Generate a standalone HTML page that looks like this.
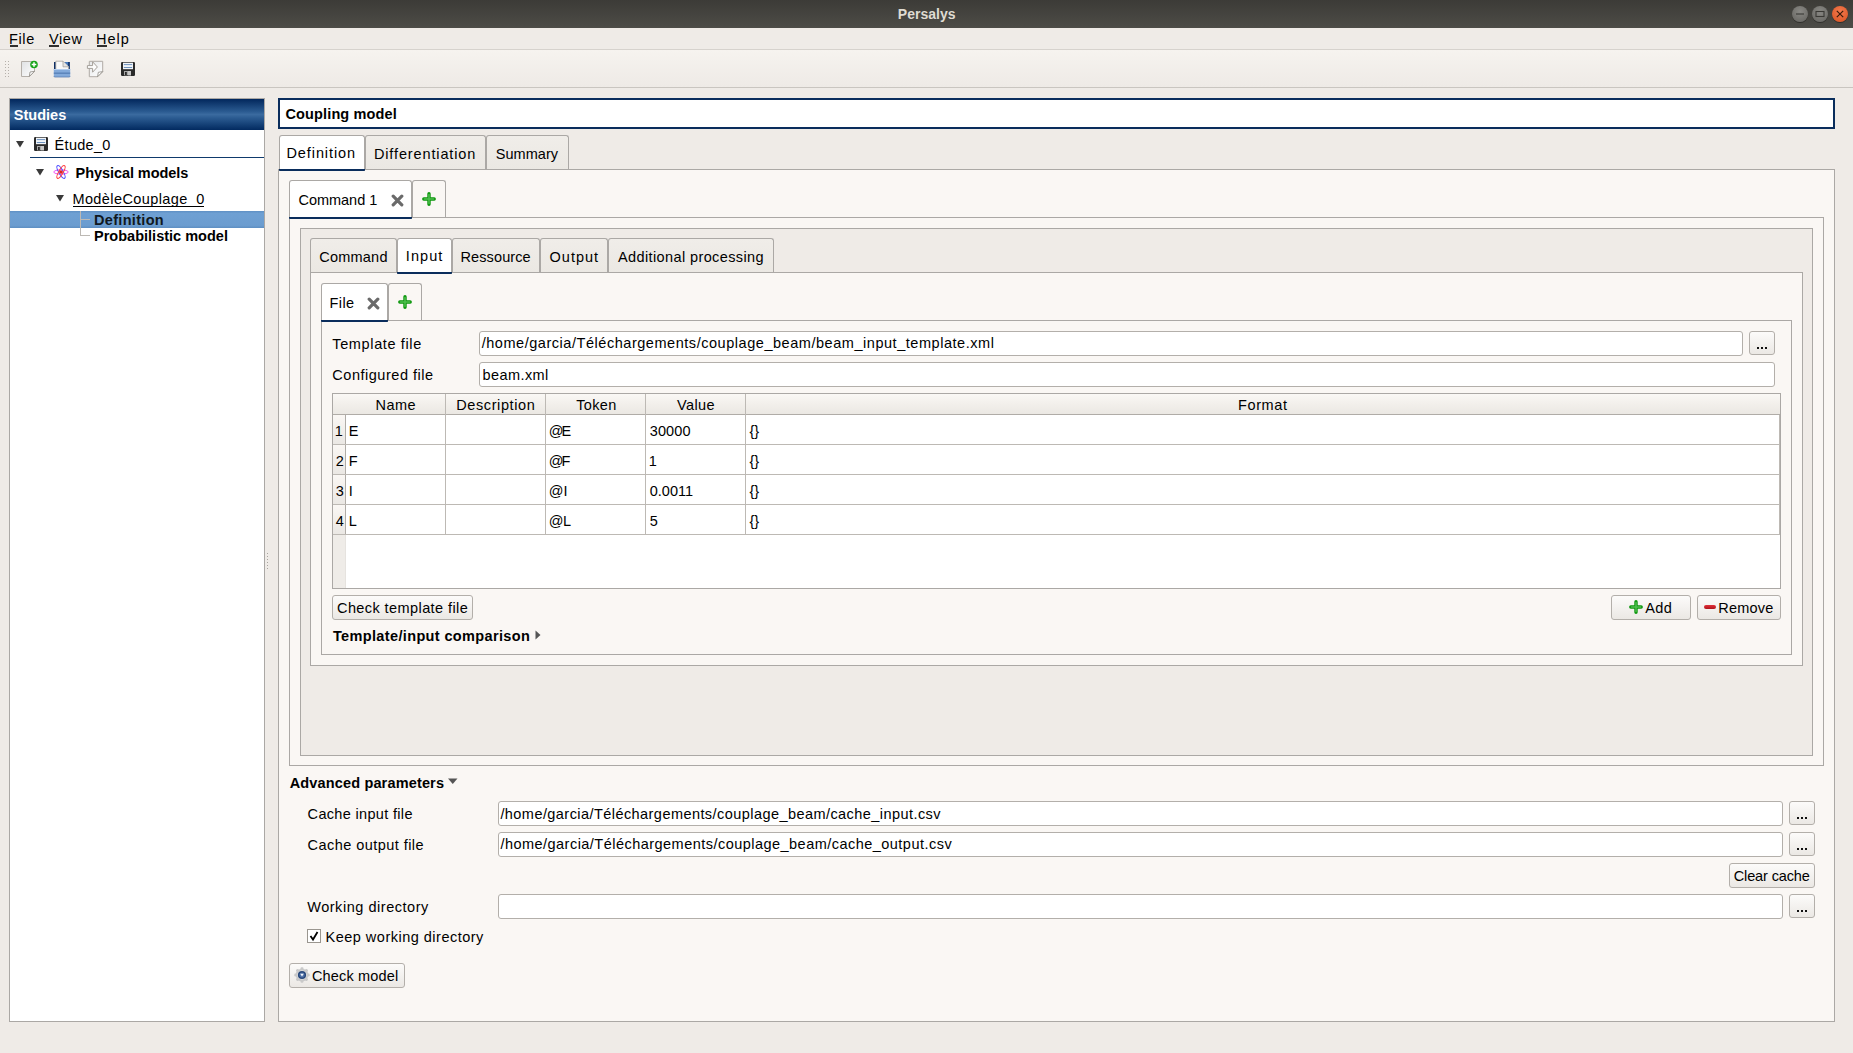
<!DOCTYPE html>
<html><head><meta charset="utf-8"><title>Persalys</title>
<style>
html,body{margin:0;padding:0;}
body{width:1853px;height:1053px;position:relative;overflow:hidden;background:#efebe7;font-family:"Liberation Sans",sans-serif;}
body>div,body>svg,body>span{position:absolute;}
.t{white-space:pre;line-height:20px;}
</style></head><body>
<div style="left:0px;top:0px;width:1853px;height:28px;background:linear-gradient(#3c3b37,#4d4c47)"></div>
<div style="left:0px;top:28px;width:1853px;height:21px;background:#efebe7"></div>
<div style="left:0px;top:49px;width:1853px;height:1px;background:#d6d2cd"></div>
<div style="left:10px;top:45px;width:8px;height:2px;background:rgba(0,0,0,.8)"></div>
<div style="left:49px;top:45px;width:10px;height:2px;background:rgba(0,0,0,.8)"></div>
<div style="left:97px;top:45px;width:10px;height:2px;background:rgba(0,0,0,.8)"></div>
<div style="left:0px;top:50px;width:1853px;height:37px;background:linear-gradient(#f6f3ef,#eeeae6)"></div>
<div style="left:0px;top:87px;width:1853px;height:1px;background:#c9c5c0"></div>
<div style="left:9px;top:98px;width:256px;height:924px;background:#fff;border:1px solid #aba8a5;box-sizing:border-box"></div>
<div style="left:10px;top:99px;width:254px;height:31px;background:linear-gradient(#02275c 0%,#2a5a90 40%,#3a6a9f 50%,#2a5a90 62%,#022a60 100%)"></div>
<div style="left:30px;top:157px;width:234px;height:1px;background:#0f3a6c"></div>
<div style="left:73px;top:206px;width:131px;height:1px;background:#000"></div>
<div style="left:10px;top:211px;width:254px;height:17px;background:linear-gradient(#5f90c4,#6fa0d3 15%,#6b9ccf 85%,#5d8ec2)"></div>
<div style="left:80px;top:211px;width:1px;height:25px;background:#bdb9b4"></div>
<div style="left:80px;top:219px;width:10px;height:1px;background:#bdb9b4"></div>
<div style="left:80px;top:235px;width:10px;height:1px;background:#bdb9b4"></div>
<div style="left:267px;top:553px;width:1px;height:1px;background:#a9a5a0"></div>
<div style="left:267px;top:556px;width:1px;height:1px;background:#a9a5a0"></div>
<div style="left:267px;top:559px;width:1px;height:1px;background:#a9a5a0"></div>
<div style="left:267px;top:562px;width:1px;height:1px;background:#a9a5a0"></div>
<div style="left:267px;top:565px;width:1px;height:1px;background:#a9a5a0"></div>
<div style="left:267px;top:568px;width:1px;height:1px;background:#a9a5a0"></div>
<div style="left:278px;top:98px;width:1557px;height:31px;background:#fff;border:2px solid #0a2d5c;box-sizing:border-box"></div>
<div style="left:278px;top:169px;width:1557px;height:853px;background:#faf7f4;border:1px solid #aba8a5;box-sizing:border-box"></div>
<div style="left:279px;top:135px;width:86px;height:36px;background:#fff;border:1px solid #aba8a5;border-bottom:none;border-radius:3px 3px 0 0;box-sizing:border-box"></div>
<div style="left:279px;top:169px;width:86px;height:2px;background:#0a2d5c;border-radius:0 0 1px 1px"></div>
<div style="left:365px;top:135px;width:121px;height:34px;background:linear-gradient(#f0ede9,#ebe8e3);border:1px solid #aba8a5;border-bottom:none;border-radius:3px 3px 0 0;box-sizing:border-box"></div>
<div style="left:486px;top:135px;width:83px;height:34px;background:linear-gradient(#f0ede9,#ebe8e3);border:1px solid #aba8a5;border-bottom:none;border-radius:3px 3px 0 0;box-sizing:border-box"></div>
<div style="left:289px;top:217px;width:1535px;height:549px;background:#faf7f4;border:1px solid #aba8a5;box-sizing:border-box"></div>
<div style="left:289px;top:180px;width:123px;height:39px;background:#fff;border:1px solid #aba8a5;border-bottom:none;border-radius:3px 3px 0 0;box-sizing:border-box"></div>
<div style="left:289px;top:217px;width:123px;height:2px;background:#0a2d5c;border-radius:0 0 1px 1px"></div>
<div style="left:412px;top:180px;width:34px;height:37px;background:#faf7f4;border:1px solid #aba8a5;border-bottom:none;border-radius:3px 3px 0 0;box-sizing:border-box"></div>
<div style="left:300px;top:228px;width:1513px;height:528px;background:#efebe7;border:1px solid #aba8a5;box-sizing:border-box"></div>
<div style="left:310px;top:272px;width:1493px;height:394px;background:#faf7f4;border:1px solid #aba8a5;box-sizing:border-box"></div>
<div style="left:310px;top:238px;width:87px;height:34px;background:linear-gradient(#f0ede9,#ebe8e3);border:1px solid #aba8a5;border-bottom:none;border-radius:3px 3px 0 0;box-sizing:border-box"></div>
<div style="left:397px;top:238px;width:55px;height:36px;background:#fff;border:1px solid #aba8a5;border-bottom:none;border-radius:3px 3px 0 0;box-sizing:border-box"></div>
<div style="left:397px;top:272px;width:55px;height:2px;background:#0a2d5c;border-radius:0 0 1px 1px"></div>
<div style="left:452px;top:238px;width:88px;height:34px;background:linear-gradient(#f0ede9,#ebe8e3);border:1px solid #aba8a5;border-bottom:none;border-radius:3px 3px 0 0;box-sizing:border-box"></div>
<div style="left:540px;top:238px;width:68px;height:34px;background:linear-gradient(#f0ede9,#ebe8e3);border:1px solid #aba8a5;border-bottom:none;border-radius:3px 3px 0 0;box-sizing:border-box"></div>
<div style="left:608px;top:238px;width:166px;height:34px;background:linear-gradient(#f0ede9,#ebe8e3);border:1px solid #aba8a5;border-bottom:none;border-radius:3px 3px 0 0;box-sizing:border-box"></div>
<div style="left:321px;top:320px;width:1471px;height:335px;background:#faf7f4;border:1px solid #aba8a5;box-sizing:border-box"></div>
<div style="left:321px;top:283px;width:67px;height:39px;background:#fff;border:1px solid #aba8a5;border-bottom:none;border-radius:3px 3px 0 0;box-sizing:border-box"></div>
<div style="left:321px;top:320px;width:67px;height:2px;background:#0a2d5c;border-radius:0 0 1px 1px"></div>
<div style="left:388px;top:283px;width:34px;height:37px;background:#faf7f4;border:1px solid #aba8a5;border-bottom:none;border-radius:3px 3px 0 0;box-sizing:border-box"></div>
<div style="left:479px;top:331px;width:1264px;height:25px;background:#fff;border:1px solid #b3afaa;border-radius:3px;box-sizing:border-box"></div>
<div style="left:1749px;top:331px;width:26px;height:24px;background:linear-gradient(#fcfbfa,#ebe8e4);border:1px solid #b3afaa;border-radius:3px;box-sizing:border-box"></div>
<div style="left:479px;top:362px;width:1296px;height:25px;background:#fff;border:1px solid #b3afaa;border-radius:3px;box-sizing:border-box"></div>
<div style="left:1757px;top:347px;width:2px;height:2px;background:#111"></div>
<div style="left:1761px;top:347px;width:2px;height:2px;background:#111"></div>
<div style="left:1765px;top:347px;width:2px;height:2px;background:#111"></div>
<div style="left:332px;top:393px;width:1449px;height:196px;background:#fff;border:1px solid #aba8a5;box-sizing:border-box"></div>
<div style="left:333px;top:394px;width:1447px;height:20px;background:linear-gradient(#faf8f5,#f3f0ec 45%,#ebe8e3)"></div>
<div style="left:333px;top:414px;width:1447px;height:1px;background:#b0aca7"></div>
<div style="left:333px;top:415px;width:12px;height:173px;background:#efece8"></div>
<div style="left:333px;top:415px;width:12px;height:29px;background:linear-gradient(#faf7f4,#ebe8e4)"></div>
<div style="left:333px;top:445px;width:12px;height:29px;background:linear-gradient(#faf7f4,#ebe8e4)"></div>
<div style="left:333px;top:475px;width:12px;height:29px;background:linear-gradient(#faf7f4,#ebe8e4)"></div>
<div style="left:333px;top:505px;width:12px;height:29px;background:linear-gradient(#faf7f4,#ebe8e4)"></div>
<div style="left:345px;top:415px;width:1px;height:120px;background:#b0aca7"></div>
<div style="left:345px;top:535px;width:1px;height:53px;background:#e6e3df"></div>
<div style="left:445px;top:394px;width:1px;height:141px;background:#bdb9b4"></div>
<div style="left:545px;top:394px;width:1px;height:141px;background:#bdb9b4"></div>
<div style="left:645px;top:394px;width:1px;height:141px;background:#bdb9b4"></div>
<div style="left:745px;top:394px;width:1px;height:141px;background:#bdb9b4"></div>
<div style="left:333px;top:444px;width:1447px;height:1px;background:#bdb9b4"></div>
<div style="left:333px;top:474px;width:1447px;height:1px;background:#bdb9b4"></div>
<div style="left:333px;top:504px;width:1447px;height:1px;background:#bdb9b4"></div>
<div style="left:333px;top:534px;width:1447px;height:1px;background:#bdb9b4"></div>
<div style="left:1779px;top:415px;width:1px;height:120px;background:#bdb9b4"></div>
<div style="left:332px;top:595px;width:141px;height:25px;background:linear-gradient(#fcfbfa,#ebe8e4);border:1px solid #b3afaa;border-radius:3px;box-sizing:border-box"></div>
<div style="left:1611px;top:595px;width:80px;height:25px;background:linear-gradient(#fcfbfa,#ebe8e4);border:1px solid #b3afaa;border-radius:3px;box-sizing:border-box"></div>
<div style="left:1697px;top:595px;width:84px;height:25px;background:linear-gradient(#fcfbfa,#ebe8e4);border:1px solid #b3afaa;border-radius:3px;box-sizing:border-box"></div>
<div style="left:498px;top:801px;width:1285px;height:25px;background:#fff;border:1px solid #b3afaa;border-radius:3px;box-sizing:border-box"></div>
<div style="left:498px;top:832px;width:1285px;height:25px;background:#fff;border:1px solid #b3afaa;border-radius:3px;box-sizing:border-box"></div>
<div style="left:1789px;top:801px;width:26px;height:24px;background:linear-gradient(#fcfbfa,#ebe8e4);border:1px solid #b3afaa;border-radius:3px;box-sizing:border-box"></div>
<div style="left:1789px;top:832px;width:26px;height:24px;background:linear-gradient(#fcfbfa,#ebe8e4);border:1px solid #b3afaa;border-radius:3px;box-sizing:border-box"></div>
<div style="left:1797px;top:817px;width:2px;height:2px;background:#111"></div>
<div style="left:1801px;top:817px;width:2px;height:2px;background:#111"></div>
<div style="left:1805px;top:817px;width:2px;height:2px;background:#111"></div>
<div style="left:1797px;top:848px;width:2px;height:2px;background:#111"></div>
<div style="left:1801px;top:848px;width:2px;height:2px;background:#111"></div>
<div style="left:1805px;top:848px;width:2px;height:2px;background:#111"></div>
<div style="left:1729px;top:863px;width:86px;height:25px;background:linear-gradient(#fcfbfa,#ebe8e4);border:1px solid #b3afaa;border-radius:3px;box-sizing:border-box"></div>
<div style="left:498px;top:894px;width:1285px;height:25px;background:#fff;border:1px solid #b3afaa;border-radius:3px;box-sizing:border-box"></div>
<div style="left:1789px;top:894px;width:26px;height:24px;background:linear-gradient(#fcfbfa,#ebe8e4);border:1px solid #b3afaa;border-radius:3px;box-sizing:border-box"></div>
<div style="left:1797px;top:910px;width:2px;height:2px;background:#111"></div>
<div style="left:1801px;top:910px;width:2px;height:2px;background:#111"></div>
<div style="left:1805px;top:910px;width:2px;height:2px;background:#111"></div>
<div style="left:307px;top:929px;width:14px;height:14px;background:#fff;border:1px solid #9a968f;box-sizing:border-box"></div>
<div style="left:289px;top:963px;width:116px;height:25px;background:linear-gradient(#fcfbfa,#ebe8e4);border:1px solid #b3afaa;border-radius:3px;box-sizing:border-box"></div>
<div style="left:5px;top:61px;width:1px;height:1px;background:#b5b0aa"></div>
<div style="left:8px;top:61px;width:1px;height:1px;background:#b5b0aa"></div>
<div style="left:5px;top:64px;width:1px;height:1px;background:#b5b0aa"></div>
<div style="left:8px;top:64px;width:1px;height:1px;background:#b5b0aa"></div>
<div style="left:5px;top:67px;width:1px;height:1px;background:#b5b0aa"></div>
<div style="left:8px;top:67px;width:1px;height:1px;background:#b5b0aa"></div>
<div style="left:5px;top:70px;width:1px;height:1px;background:#b5b0aa"></div>
<div style="left:8px;top:70px;width:1px;height:1px;background:#b5b0aa"></div>
<div style="left:5px;top:73px;width:1px;height:1px;background:#b5b0aa"></div>
<div style="left:8px;top:73px;width:1px;height:1px;background:#b5b0aa"></div>
<div style="left:5px;top:76px;width:1px;height:1px;background:#b5b0aa"></div>
<div style="left:8px;top:76px;width:1px;height:1px;background:#b5b0aa"></div>
<div style="left:1792px;top:6px;width:16px;height:16px;border-radius:50%;background:radial-gradient(circle at 50% 35%,#8a8985,#63625e);box-shadow:0 1px 0 rgba(0,0,0,.35)"></div>
<div style="left:1812px;top:6px;width:16px;height:16px;border-radius:50%;background:radial-gradient(circle at 50% 35%,#8a8985,#63625e);box-shadow:0 1px 0 rgba(0,0,0,.35)"></div>
<div style="left:1832px;top:6px;width:16px;height:16px;border-radius:50%;background:radial-gradient(circle at 50% 35%,#f47b4f,#d9501f);box-shadow:0 1px 0 rgba(0,0,0,.35)"></div>
<svg style="left:1792px;top:6px" width="56" height="16"><line x1="4" y1="8" x2="12" y2="8" stroke="#3a3935" stroke-width="1.1"/><rect x="24" y="5.5" width="8" height="5" fill="none" stroke="#3a3935" stroke-width="1.1"/><path d="M44.8 4.8 L51.2 11.2 M51.2 4.8 L44.8 11.2" stroke="#3a1a0a" stroke-width="1.2"/></svg>
<svg style="left:390.5px;top:193.5px" width="13" height="13" viewBox="0 0 13 13"><path d="M2.2 2.2 L10.8 10.8 M10.8 2.2 L2.2 10.8" stroke="#6a6a6a" stroke-width="3.2" stroke-linecap="round"/></svg>
<svg style="left:422px;top:192px" width="14" height="14" viewBox="0 0 14 14"><path d="M7 1.8 V12.2 M1.8 7 H12.2" stroke="#0c960c" stroke-width="3.4" stroke-linecap="round"/><path d="M7 2.4 V11.6 M2.4 7 H11.6" stroke="#4fbf4f" stroke-width="1.5" stroke-linecap="round"/></svg>
<svg style="left:366.5px;top:296.5px" width="13" height="13" viewBox="0 0 13 13"><path d="M2.2 2.2 L10.8 10.8 M10.8 2.2 L2.2 10.8" stroke="#6a6a6a" stroke-width="3.2" stroke-linecap="round"/></svg>
<svg style="left:398px;top:295px" width="14" height="14" viewBox="0 0 14 14"><path d="M7 1.8 V12.2 M1.8 7 H12.2" stroke="#0c960c" stroke-width="3.4" stroke-linecap="round"/><path d="M7 2.4 V11.6 M2.4 7 H11.6" stroke="#4fbf4f" stroke-width="1.5" stroke-linecap="round"/></svg>
<svg style="left:1629px;top:600px" width="14" height="14" viewBox="0 0 14 14"><path d="M7 1.8 V12.2 M1.8 7 H12.2" stroke="#0c960c" stroke-width="3.4" stroke-linecap="round"/><path d="M7 2.4 V11.6 M2.4 7 H11.6" stroke="#4fbf4f" stroke-width="1.5" stroke-linecap="round"/></svg>
<div style="left:1704px;top:605px;width:12px;height:4px;border-radius:2px;background:linear-gradient(#e0303a,#b0141c)"></div>
<svg style="left:535px;top:630px" width="6" height="10"><path d="M0.5 0.5 L5.5 5 L0.5 9.5 Z" fill="#555"/></svg>
<svg style="left:448px;top:778px" width="10" height="7"><path d="M0 0.5 H9.5 L4.75 6 Z" fill="#555"/></svg>
<svg style="left:307px;top:929px" width="14" height="14"><path d="M3.5 7 L6 10.5 L10.5 3" fill="none" stroke="#000" stroke-width="1.8"/></svg>
<svg style="left:121px;top:62px" width="14" height="14" viewBox="0 0 14 14">
<rect x="0" y="0" width="14" height="14" rx="1.2" fill="#2a2a2a"/>
<rect x="2" y="0.7" width="10" height="6.5" fill="#f2f5f8"/>
<rect x="2.8" y="2.1" width="8.4" height="1" fill="#6f93bf"/>
<rect x="2.8" y="5.0" width="8.4" height="1" fill="#6f93bf"/>
<rect x="3" y="9" width="7" height="4.3" fill="#a9a9a9"/>
<rect x="7" y="9" width="3" height="4.3" fill="#c8c8c8"/>
<rect x="4" y="10" width="1.8" height="3" fill="#2a2a2a"/>
</svg>
<svg style="left:34px;top:137px" width="14" height="14" viewBox="0 0 14 14">
<rect x="0" y="0" width="14" height="14" rx="1.2" fill="#2a2a2a"/>
<rect x="2" y="0.7" width="10" height="6.5" fill="#f2f5f8"/>
<rect x="2.8" y="2.1" width="8.4" height="1" fill="#6f93bf"/>
<rect x="2.8" y="5.0" width="8.4" height="1" fill="#6f93bf"/>
<rect x="3" y="9" width="7" height="4.3" fill="#a9a9a9"/>
<rect x="7" y="9" width="3" height="4.3" fill="#c8c8c8"/>
<rect x="4" y="10" width="1.8" height="3" fill="#2a2a2a"/>
</svg>
<svg style="left:20px;top:60px" width="19" height="18" viewBox="0 0 19 18">
<defs><linearGradient id="pg" x1="0" y1="0" x2="1" y2="1"><stop offset="0" stop-color="#dfe1e3"/><stop offset="1" stop-color="#fff"/></linearGradient></defs>
<path d="M1.5 1.5 H14.5 V11.3 L9.3 16.5 H1.5 Z" fill="url(#pg)" stroke="#b4afa9" stroke-width="1"/>
<path d="M9.3 16.5 L10 12 L14.5 11.3 Z" fill="#fff" stroke="#8a8680" stroke-width="0.8"/>
<circle cx="14" cy="4.5" r="3.8" fill="#1aa51a"/>
<path d="M14 2.2 V6.8 M11.7 4.5 H16.3" stroke="#fff" stroke-width="1.5"/>
</svg>
<svg style="left:53px;top:60px" width="18" height="18" viewBox="0 0 18 18">
<path d="M1 2 H16.5 V10 H1 Z" fill="#4a7cbd"/>
<path d="M1 2 H3 V10 H1Z" fill="#0e2f66"/>
<path d="M15.2 2 H16.8 V10 H15.2Z" fill="#0e2f66"/>
<path d="M2.8 1.2 H10 L15.6 6.8 V10 H2.8 Z" fill="#f9f9f9" stroke="#a6a29d" stroke-width="0.8"/>
<path d="M10 1.2 V6.8 H15.6" fill="#e4e4e4" stroke="#a6a29d" stroke-width="0.8"/>
<path d="M0.8 9 H17.2 V15.8 Q17.2 17 16 17 H2 Q0.8 17 0.8 15.8Z" fill="#82a9da"/>
<rect x="0.8" y="9" width="16.4" height="1" fill="#b3cdee"/>
<rect x="0.8" y="12.6" width="16.4" height="1.1" fill="#4e78b0"/>
<path d="M0.8 16 Q0.8 17 2 17 H16 Q17.2 17 17.2 16" fill="none" stroke="#5a7fb3" stroke-width="0.8"/>
</svg>
<svg style="left:86px;top:60px" width="18" height="18" viewBox="0 0 18 18">
<defs><linearGradient id="pg2" x1="0" y1="0" x2="1" y2="1"><stop offset="0" stop-color="#e6e8ea"/><stop offset="1" stop-color="#fff"/></linearGradient></defs>
<path d="M3.3 1.3 H16.7 V11.6 L11.6 16.7 H3.3 Z" fill="url(#pg2)" stroke="#b0aba5" stroke-width="1"/>
<path d="M11.6 16.7 L12.3 12.3 L16.7 11.6 Z" fill="#fff" stroke="#8a8680" stroke-width="0.8"/>
<path d="M1.4 5.6 H6.6 V1.8 L11.4 7 L6.6 12.2 V8.4 H1.4 Z" fill="#fdfdfd" stroke="#a49f99" stroke-width="1"/>
</svg>
<svg style="left:53px;top:165px" width="16" height="14" viewBox="0 0 16 14">
<ellipse cx="8" cy="7" rx="7.2" ry="2.2" fill="none" stroke="#f050f0" stroke-width="1"/>
<ellipse cx="8" cy="7" rx="7.2" ry="2.2" transform="rotate(60 8 7)" fill="none" stroke="#5050ff" stroke-width="1"/>
<ellipse cx="8" cy="7" rx="7.2" ry="2.2" transform="rotate(-60 8 7)" fill="none" stroke="#ff4040" stroke-width="1"/>
<circle cx="8" cy="7" r="1.8" fill="#e02020"/>
</svg>
<svg style="left:294px;top:967px" width="16" height="16" viewBox="0 0 16 16">
<g fill="#c9c9c9"><circle cx="8" cy="8" r="6.3"/>
<rect x="6.5" y="0.3" width="3" height="15.4" rx="1.2"/><rect x="0.3" y="6.5" width="15.4" height="3" rx="1.2"/>
<rect x="6.5" y="0.3" width="3" height="15.4" rx="1.2" transform="rotate(45 8 8)"/><rect x="6.5" y="0.3" width="3" height="15.4" rx="1.2" transform="rotate(-45 8 8)"/></g>
<circle cx="8" cy="8" r="4.6" fill="#e6e6e6"/>
<circle cx="8" cy="8" r="4.1" fill="#27477a"/>
<circle cx="8" cy="8" r="2.6" fill="#4d6fa6"/>
<path d="M6.2 6.8 H9.8 L8 9.6Z" fill="#f4f7fb"/>
</svg>
<svg style="left:16px;top:141px" width="8" height="7"><path d="M0 0 H8 L4 6.5 Z" fill="#3a3a3a"/></svg>
<svg style="left:36px;top:169px" width="8" height="7"><path d="M0 0 H8 L4 6.5 Z" fill="#3a3a3a"/></svg>
<svg style="left:56px;top:195px" width="8" height="7"><path d="M0 0 H8 L4 6.5 Z" fill="#3a3a3a"/></svg>
<span class="t" style="left:897.80px;top:4.00px;color:#dfdbd2;font-size:14px;font-weight:bold;letter-spacing:0.026px;">Persalys</span>
<span class="t" style="left:9.00px;top:29.20px;color:#000;font-size:14.5px;letter-spacing:0.633px;">File</span>
<span class="t" style="left:48.90px;top:29.20px;color:#000;font-size:14.5px;letter-spacing:0.668px;">View</span>
<span class="t" style="left:96.00px;top:29.20px;color:#000;font-size:14.5px;letter-spacing:0.981px;">Help</span>
<span class="t" style="left:13.70px;top:105.00px;color:#fff;font-size:14.5px;font-weight:bold;letter-spacing:0.032px;">Studies</span>
<span class="t" style="left:54.60px;top:135.00px;color:#000;font-size:14.5px;letter-spacing:0.291px;">Étude_0</span>
<span class="t" style="left:75.60px;top:163.00px;color:#000;font-size:14.5px;font-weight:bold;letter-spacing:-0.069px;">Physical models</span>
<span class="t" style="left:72.40px;top:188.80px;color:#000;font-size:14.5px;letter-spacing:0.407px;">ModèleCouplage_0</span>
<span class="t" style="left:94.00px;top:209.50px;color:#101820;font-size:14.5px;font-weight:bold;letter-spacing:0.312px;">Definition</span>
<span class="t" style="left:94.00px;top:226.30px;color:#000;font-size:14.5px;font-weight:bold;letter-spacing:0.010px;">Probabilistic model</span>
<span class="t" style="left:285.50px;top:104.00px;color:#000;font-size:14.5px;font-weight:bold;letter-spacing:0.130px;">Coupling model</span>
<span class="t" style="left:286.50px;top:142.80px;color:#000;font-size:14.5px;letter-spacing:0.902px;">Definition</span>
<span class="t" style="left:373.90px;top:144.00px;color:#000;font-size:14.5px;letter-spacing:0.876px;">Differentiation</span>
<span class="t" style="left:495.80px;top:144.00px;color:#000;font-size:14.5px;letter-spacing:0.036px;">Summary</span>
<span class="t" style="left:298.50px;top:189.50px;color:#000;font-size:14.5px;letter-spacing:-0.027px;">Command 1</span>
<span class="t" style="left:319.30px;top:246.90px;color:#000;font-size:14.5px;letter-spacing:0.213px;">Command</span>
<span class="t" style="left:405.80px;top:246.00px;color:#000;font-size:14.5px;letter-spacing:1.070px;">Input</span>
<span class="t" style="left:460.50px;top:247.00px;color:#000;font-size:14.5px;letter-spacing:0.107px;">Ressource</span>
<span class="t" style="left:549.60px;top:247.00px;color:#000;font-size:14.5px;letter-spacing:0.980px;">Output</span>
<span class="t" style="left:617.90px;top:247.00px;color:#000;font-size:14.5px;letter-spacing:0.396px;">Additional processing</span>
<span class="t" style="left:329.60px;top:292.60px;color:#000;font-size:14.5px;letter-spacing:0.367px;">File</span>
<span class="t" style="left:332.30px;top:333.60px;color:#000;font-size:14.5px;letter-spacing:0.630px;">Template file</span>
<span class="t" style="left:332.30px;top:364.90px;color:#000;font-size:14.5px;letter-spacing:0.526px;">Configured file</span>
<span class="t" style="left:481.70px;top:333.30px;color:#000;font-size:14.5px;letter-spacing:0.539px;">/home/garcia/Téléchargements/couplage_beam/beam_input_template.xml</span>
<span class="t" style="left:482.50px;top:364.50px;color:#000;font-size:14.5px;letter-spacing:0.425px;">beam.xml</span>
<span class="t" style="left:375.50px;top:395.00px;color:#000;font-size:14.5px;letter-spacing:0.429px;">Name</span>
<span class="t" style="left:456.20px;top:395.00px;color:#000;font-size:14.5px;letter-spacing:0.604px;">Description</span>
<span class="t" style="left:576.30px;top:395.00px;color:#000;font-size:14.5px;letter-spacing:0.318px;">Token</span>
<span class="t" style="left:677.00px;top:395.00px;color:#000;font-size:14.5px;letter-spacing:0.389px;">Value</span>
<span class="t" style="left:1237.90px;top:394.80px;color:#000;font-size:14.5px;letter-spacing:0.661px;">Format</span>
<span class="t" style="left:334.80px;top:420.50px;color:#000;font-size:14.5px;">1</span>
<span class="t" style="left:348.80px;top:420.50px;color:#000;font-size:14.5px;">E</span>
<span class="t" style="left:548.70px;top:420.50px;color:#000;font-size:14.5px;letter-spacing:-1.819px;">@E</span>
<span class="t" style="left:649.80px;top:420.50px;color:#000;font-size:14.5px;letter-spacing:0.086px;">30000</span>
<span class="t" style="left:749.40px;top:420.50px;color:#000;font-size:14.5px;">{}</span>
<span class="t" style="left:335.80px;top:450.50px;color:#000;font-size:14.5px;">2</span>
<span class="t" style="left:348.80px;top:450.50px;color:#000;font-size:14.5px;">F</span>
<span class="t" style="left:548.70px;top:450.50px;color:#000;font-size:14.5px;letter-spacing:-1.819px;">@F</span>
<span class="t" style="left:648.80px;top:450.50px;color:#000;font-size:14.5px;">1</span>
<span class="t" style="left:749.40px;top:450.50px;color:#000;font-size:14.5px;">{}</span>
<span class="t" style="left:335.80px;top:480.50px;color:#000;font-size:14.5px;">3</span>
<span class="t" style="left:348.80px;top:480.50px;color:#000;font-size:14.5px;">I</span>
<span class="t" style="left:548.70px;top:480.50px;color:#000;font-size:14.5px;letter-spacing:-0.019px;">@I</span>
<span class="t" style="left:649.80px;top:480.50px;color:#000;font-size:14.5px;letter-spacing:-0.022px;">0.0011</span>
<span class="t" style="left:749.40px;top:480.50px;color:#000;font-size:14.5px;">{}</span>
<span class="t" style="left:335.80px;top:510.50px;color:#000;font-size:14.5px;">4</span>
<span class="t" style="left:348.80px;top:510.50px;color:#000;font-size:14.5px;">L</span>
<span class="t" style="left:548.70px;top:510.50px;color:#000;font-size:14.5px;letter-spacing:-0.319px;">@L</span>
<span class="t" style="left:649.80px;top:510.50px;color:#000;font-size:14.5px;">5</span>
<span class="t" style="left:749.40px;top:510.50px;color:#000;font-size:14.5px;">{}</span>
<span class="t" style="left:337.00px;top:597.50px;color:#000;font-size:14.5px;letter-spacing:0.414px;">Check template file</span>
<span class="t" style="left:1645.30px;top:597.80px;color:#000;font-size:14.5px;letter-spacing:0.382px;">Add</span>
<span class="t" style="left:1718.30px;top:597.80px;color:#000;font-size:14.5px;letter-spacing:0.194px;">Remove</span>
<span class="t" style="left:332.90px;top:625.90px;color:#000;font-size:14.5px;font-weight:bold;letter-spacing:0.363px;">Template/input comparison</span>
<span class="t" style="left:289.70px;top:772.90px;color:#000;font-size:14.5px;font-weight:bold;letter-spacing:0.153px;">Advanced parameters</span>
<span class="t" style="left:307.60px;top:803.80px;color:#000;font-size:14.5px;letter-spacing:0.328px;">Cache input file</span>
<span class="t" style="left:307.60px;top:834.80px;color:#000;font-size:14.5px;letter-spacing:0.446px;">Cache output file</span>
<span class="t" style="left:500.40px;top:803.80px;color:#000;font-size:14.5px;letter-spacing:0.439px;">/home/garcia/Téléchargements/couplage_beam/cache_input.csv</span>
<span class="t" style="left:500.40px;top:834.40px;color:#000;font-size:14.5px;letter-spacing:0.470px;">/home/garcia/Téléchargements/couplage_beam/cache_output.csv</span>
<span class="t" style="left:1733.70px;top:865.80px;color:#000;font-size:14.5px;letter-spacing:-0.121px;">Clear cache</span>
<span class="t" style="left:307.20px;top:897.00px;color:#000;font-size:14.5px;letter-spacing:0.538px;">Working directory</span>
<span class="t" style="left:325.50px;top:926.70px;color:#000;font-size:14.5px;letter-spacing:0.494px;">Keep working directory</span>
<span class="t" style="left:311.90px;top:965.90px;color:#000;font-size:14.5px;letter-spacing:0.170px;">Check model</span>
</body></html>
